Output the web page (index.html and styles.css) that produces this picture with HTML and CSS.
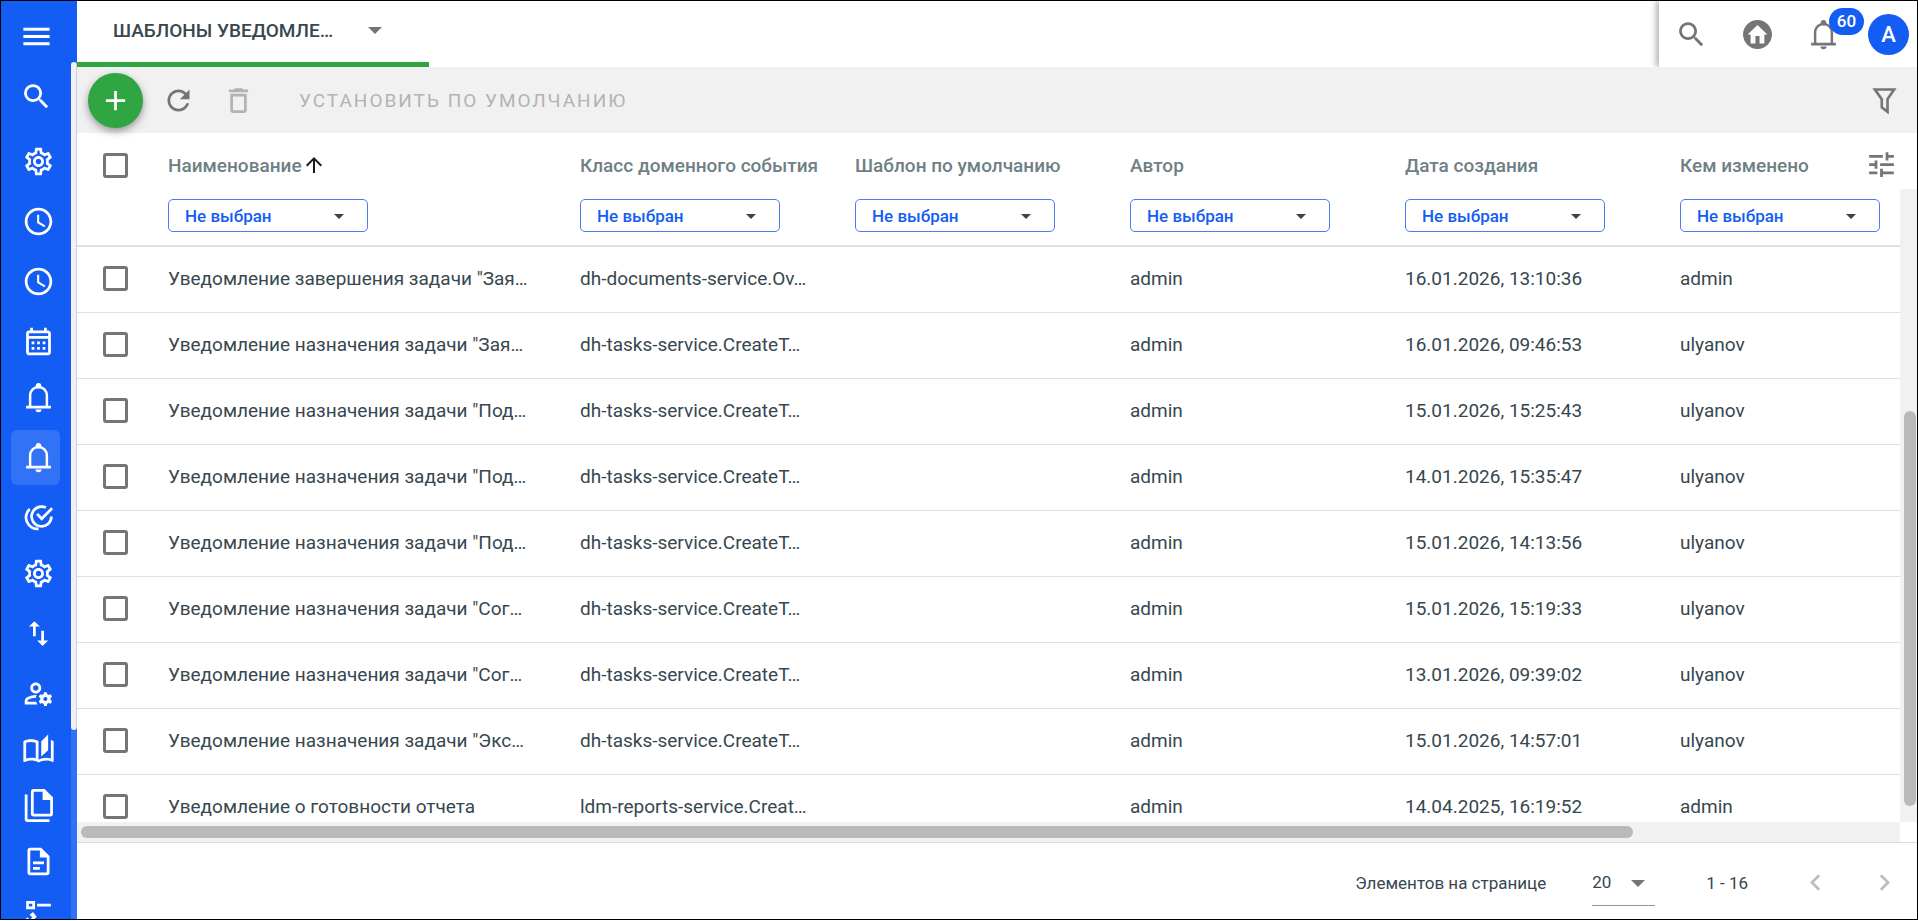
FILE: index.html
```html
<!DOCTYPE html>
<html lang="ru">
<head>
    <meta charset="UTF-8">
    <meta name="viewport" content="width=device-width, initial-scale=1.0">
    <title>Шаблоны уведомлений</title>
    <link rel="stylesheet" href="styles.css">
</head>
<body>
    <!-- icon set -->
    <svg class="sprite" aria-hidden="true">
        <symbol id="i-menu" viewBox="0 0 24 24"><path d="M3 18h18v-2H3v2zm0-5h18v-2H3v2zm0-7v2h18V6H3z"/></symbol>
        <symbol id="i-search" viewBox="0 0 24 24"><path d="M15.5 14h-.79l-.28-.27C15.41 12.59 16 11.11 16 9.5 16 5.91 13.09 3 9.5 3S3 5.91 3 9.5 5.91 16 9.5 16c1.61 0 3.09-.59 4.23-1.57l.27.28v.79l5 4.99L20.49 19l-4.99-5zm-6 0C7.01 14 5 11.99 5 9.5S7.01 5 9.5 5 14 7.01 14 9.5 11.99 14 9.5 14z"/></symbol>
        <symbol id="i-gear" viewBox="0 0 24 24"><path d="M19.43 12.98c.04-.32.07-.64.07-.98 0-.34-.03-.66-.07-.98l2.11-1.65c.19-.15.24-.42.12-.64l-2-3.46c-.09-.16-.26-.25-.44-.25-.06 0-.12.01-.17.03l-2.49 1c-.52-.4-1.08-.73-1.69-.98l-.38-2.65C14.46 2.18 14.25 2 14 2h-4c-.25 0-.46.18-.49.42l-.38 2.65c-.61.25-1.17.59-1.69.98l-2.49-1c-.06-.02-.12-.03-.18-.03-.17 0-.34.09-.43.25l-2 3.46c-.13.22-.07.49.12.64l2.11 1.65c-.04.32-.07.65-.07.98 0 .33.03.66.07.98l-2.11 1.65c-.19.15-.24.42-.12.64l2 3.46c.09.16.26.25.44.25.06 0 .12-.01.17-.03l2.49-1c.52.4 1.08.73 1.69.98l.38 2.65c.03.24.24.42.49.42h4c.25 0 .46-.18.49-.42l.38-2.65c.61-.25 1.17-.59 1.69-.98l2.49 1c.06.02.12.03.18.03.17 0 .34-.09.43-.25l2-3.46c.12-.22.07-.49-.12-.64l-2.11-1.65zm-1.98-1.71c.04.31.05.52.05.73 0 .21-.02.43-.05.73l-.14 1.13.89.7 1.08.84-.7 1.21-1.27-.51-1.04-.42-.9.68c-.43.32-.84.56-1.25.73l-1.06.43-.16 1.13-.2 1.35h-1.4l-.19-1.35-.16-1.13-1.06-.43c-.43-.18-.83-.41-1.23-.71l-.91-.7-1.06.43-1.27.51-.7-1.21 1.08-.84.89-.7-.14-1.13c-.03-.31-.05-.54-.05-.74s.02-.43.05-.73l.14-1.13-.89-.7-1.08-.84.7-1.21 1.27.51 1.04.42.9-.68c.43-.32.84-.56 1.25-.73l1.06-.43.16-1.13.2-1.35h1.39l.19 1.35.16 1.13 1.06.43c.43.18.83.41 1.23.71l.91.7 1.06-.43 1.27-.51.7 1.21-1.07.85-.89.7.14 1.13zM12 8c-2.21 0-4 1.79-4 4s1.79 4 4 4 4-1.79 4-4-1.79-4-4-4zm0 6c-1.1 0-2-.9-2-2s.9-2 2-2 2 .9 2 2-.9 2-2 2z"/></symbol>
        <symbol id="i-clock" viewBox="0 0 24 24"><path d="M11.99 2C6.47 2 2 6.48 2 12s4.47 10 9.99 10C17.52 22 22 17.52 22 12S17.52 2 11.99 2zM12 20c-4.42 0-8-3.58-8-8s3.58-8 8-8 8 3.58 8 8-3.58 8-8 8zm.5-13H11v6l5.25 3.15.75-1.23-4.5-2.67z"/></symbol>
        <symbol id="i-calendar" viewBox="0 0 24 24"><path d="M19 4h-1V2h-2v2H8V2H6v2H5c-1.11 0-1.99.9-1.99 2L3 20c0 1.1.89 2 2 2h14c1.1 0 2-.9 2-2V6c0-1.1-.9-2-2-2zm0 16H5V10h14v10zm0-12H5V6h14v2zM9 14H7v-2h2v2zm4 0h-2v-2h2v2zm4 0h-2v-2h2v2zm-8 4H7v-2h2v2zm4 0h-2v-2h2v2zm4 0h-2v-2h2v2z"/></symbol>
        <symbol id="i-bell" viewBox="0 0 24 24"><circle cx="12" cy="3.4" r="2"/><path d="M3 18h18v2H3zM9.8 20.7h4.4a2.2 2 0 0 1-4.4 0z"/><path d="M5.9 19v-8.4a6.1 6.3 0 0 1 12.2 0V19" fill="none" stroke="currentColor" stroke-width="1.8"/></symbol>
        <symbol id="i-tasks" viewBox="0 0 24 24"><path d="M17.4 4.8A7.2 7.2 0 1 0 21.4 11.2M11 9.4l3.3 3.5 7.6-7.6M5.6 5.8A8.4 8.4 0 0 0 12 20.3" fill="none" stroke="currentColor" stroke-width="2"/></symbol>
        <symbol id="i-swap" viewBox="0 0 24 24"><path d="M16 17.01V10h-2v7.01h-3L15 21l4-3.99h-3zM9 3L5 6.99h3V14h2V6.99h3L9 3z"/></symbol>
        <symbol id="i-accounts" viewBox="0 0 24 24"><path d="M4 18v-.65c0-.34.16-.66.41-.81C6.1 15.53 8.03 15 10 15c.03 0 .05 0 .08.01.1-.7.3-1.37.59-1.98-.22-.02-.44-.03-.67-.03-2.42 0-4.68.67-6.61 1.82C2.51 15.34 2 16.32 2 17.35V20h9.26c-.42-.6-.75-1.28-.97-2H4zM10 12c2.21 0 4-1.79 4-4s-1.79-4-4-4-4 1.79-4 4 1.79 4 4 4zm0-6c1.1 0 2 .9 2 2s-.9 2-2 2-2-.9-2-2 .9-2 2-2zM20.75 16c0-.22-.03-.42-.06-.63l1.14-1.01-1-1.73-1.45.49c-.32-.27-.68-.48-1.08-.63L18 11h-2l-.3 1.49c-.4.15-.76.36-1.08.63l-1.45-.49-1 1.73 1.14 1.01c-.03.21-.06.41-.06.63s.03.42.06.63l-1.14 1.01 1 1.73 1.45-.49c.32.27.68.48 1.08.63L16 21h2l.3-1.49c.4-.15.76-.36 1.08-.63l1.45.49 1-1.73-1.14-1.01c.03-.21.06-.41.06-.63zM17 17.5a1.5 1.5 0 1 1 0-3 1.5 1.5 0 0 1 0 3z"/></symbol>
        <symbol id="i-book" viewBox="0 0 24 24"><path fill-rule="evenodd" d="M19 1l-5 5v11l5-4.500V1zM1 6v14.650c0 .25.25.5.5.5.1 0 .15-.05.25-.05C3.100 20.450 5.050 20 6.500 20c1.950 0 4.050.4 5.500 1.500 1.350-.85 3.800-1.500 5.500-1.500 1.650 0 3.350.3 4.750 1.050.1.05.15.05.25.05.25 0 .5-.25.5-.5V6c-.6-.45-1.250-.75-2-1v13.500c-1.100-.35-2.300-.5-3.500-.5-1.700 0-4.150.65-5.500 1.500V6c-1.450-1.100-3.550-1.500-5.500-1.500S2.450 4.900 1 6zm9 12.400V7.100c-1-.4-2.200-.6-3.500-.6S4 6.700 3 7.100v11.500c1.100-.4 2.300-.6 3.500-.6s2.400.1 3.500.4z"/></symbol>
        <symbol id="i-copy" viewBox="0 0 24 24"><path d="M8.500 1H16l5.500 5.500V18a1 1 0 0 1-1 1h-12a1 1 0 0 1-1-1V2a1 1 0 0 1 1-1zM3 4v18a1 1 0 0 0 1 1h16" fill="none" stroke="currentColor" stroke-width="2"/><path d="M15 1v7h7z"/></symbol>
        <symbol id="i-doc" viewBox="0 0 24 24"><path d="M6 3h7.500L19 8.500V20a1 1 0 0 1-1 1H6a1 1 0 0 1-1-1V4a1 1 0 0 1 1-1z" fill="none" stroke="currentColor" stroke-width="2"/><path d="M13 2v7h7zM8 12h8v2H8zM8 16h5v2H8z"/></symbol>
        <symbol id="i-list" viewBox="0 0 24 24"><path fill-rule="evenodd" d="M3 0h6.500v6H3zm2 2v2h2.500V2zM11 2h10v2H11zM11 13h10v2H11zM5.700 16.500L2.500 13.300l1.400-1.400 1.800 1.800 1.800-1.800L5.500 10 8 8l2.700 3.500z"/></symbol>
        <symbol id="i-home" viewBox="0 0 24 24"><path fill-rule="evenodd" d="M12 1.500a10.500 10.500 0 1 0 0 21 10.500 10.500 0 0 0 0-21zM12 5l7.200 7H17v6.500h-3.500V13h-3v5.500H7V12H4.800z"/></symbol>
        <symbol id="i-refresh" viewBox="0 0 24 24"><path d="M17.650 6.350C16.200 4.900 14.210 4 12 4c-4.420 0-7.990 3.580-7.990 8s3.570 8 7.990 8c3.730 0 6.840-2.550 7.730-6h-2.080c-.82 2.330-3.040 4-5.650 4-3.310 0-6-2.690-6-6s2.690-6 6-6c1.660 0 3.140.69 4.220 1.780L13 11h7V4l-2.350 2.350z"/></symbol>
        <symbol id="i-trash" viewBox="0 0 24 24"><path fill-rule="evenodd" d="M6 19c0 1.100.9 2 2 2h8c1.100 0 2-.9 2-2V7H6v12zM8 9h8v10H8V9zm7.500-5l-1-1h-5l-1 1H5v2h14V4h-3.500z"/></symbol>
        <symbol id="i-plus" viewBox="0 0 24 24"><path d="M19 13h-6v6h-2v-6H5v-2h6V5h2v6h6v2z"/></symbol>
        <symbol id="i-filter" viewBox="0 0 24 24"><path d="M5 4h14l-4.800 7v9.200L10 17v-6z" fill="none" stroke="currentColor" stroke-width="1.900"/></symbol>
        <symbol id="i-tune" viewBox="0 0 24 24"><path d="M3 17v2h6v-2H3zM3 5v2h10V5H3zm10 16v-2h8v-2h-8v-2h-2v6h2zM7 9v2H3v2h4v2h2V9H7zm14 4v-2H11v2h10zm-6-4h2V7h4V5h-4V3h-2v6z"/></symbol>
        <symbol id="i-up" viewBox="0 0 24 24"><path d="M4 12l1.410 1.410L11 7.830V20h2V7.830l5.580 5.590L20 12l-8-8-8 8z"/></symbol>
        <symbol id="i-prev" viewBox="0 0 24 24"><path d="M15.410 7.410L14 6l-6 6 6 6 1.410-1.410L10.830 12z"/></symbol>
        <symbol id="i-next" viewBox="0 0 24 24"><path d="M10 6L8.590 7.410 13.170 12l-4.580 4.590L10 18l6-6z"/></symbol>
    </svg>

    <div class="app">
        <nav class="sidebar">
            <button class="menu-button" aria-label="Меню"><svg class="icon"><use href="#i-menu"/></svg></button>
            <div class="sidebar-scroll">
                <div class="sidebar-items">
                    <button class="nav-search" aria-label="Поиск"><svg class="icon"><use href="#i-search"/></svg></button>
                    <a class="nav-item" href="#" aria-label="Настройки"><svg class="icon"><use href="#i-gear"/></svg></a>
                    <a class="nav-item" href="#" aria-label="История"><svg class="icon"><use href="#i-clock"/></svg></a>
                    <a class="nav-item" href="#" aria-label="Расписание"><svg class="icon"><use href="#i-clock"/></svg></a>
                    <a class="nav-item tight" href="#" aria-label="Календарь"><svg class="icon"><use href="#i-calendar"/></svg></a>
                    <a class="nav-item" href="#" aria-label="Уведомления"><svg class="icon"><use href="#i-bell"/></svg></a>
                    <a class="nav-item active" href="#" aria-label="Шаблоны уведомлений"><svg class="icon"><use href="#i-bell"/></svg></a>
                    <a class="nav-item tight" href="#" aria-label="Задачи"><svg class="icon"><use href="#i-tasks"/></svg></a>
                    <a class="nav-item" href="#" aria-label="Параметры"><svg class="icon"><use href="#i-gear"/></svg></a>
                    <a class="nav-item" href="#" aria-label="Обмен"><svg class="icon"><use href="#i-swap"/></svg></a>
                    <a class="nav-item tight" href="#" aria-label="Пользователи"><svg class="icon"><use href="#i-accounts"/></svg></a>
                    <a class="nav-item tight" href="#" aria-label="Справочники"><svg class="icon"><use href="#i-book"/></svg></a>
                    <a class="nav-item tight" href="#" aria-label="Документы"><svg class="icon"><use href="#i-copy"/></svg></a>
                    <a class="nav-item tight" href="#" aria-label="Отчет"><svg class="icon"><use href="#i-doc"/></svg></a>
                    <a class="nav-item" href="#" aria-label="Список"><svg class="icon"><use href="#i-list"/></svg></a>
                </div>
                <div class="sidebar-track"><div class="sidebar-thumb"></div></div>
            </div>
        </nav>

        <main class="content">
            <header class="topbar">
                <button class="tab"><span>ШАБЛОНЫ УВЕДОМЛЕ…</span><i class="arrow"></i></button>
                <div class="user-panel">
                    <button class="icon-button" aria-label="Поиск"><svg class="icon"><use href="#i-search"/></svg></button>
                    <button class="icon-button" aria-label="Домой"><svg class="icon"><use href="#i-home"/></svg></button>
                    <button class="icon-button" aria-label="Уведомления"><svg class="icon"><use href="#i-bell"/></svg><span class="badge">60</span></button>
                    <button class="avatar">A</button>
                </div>
            </header>

            <div class="toolbar">
                <button class="add-button" aria-label="Добавить"><svg class="icon"><use href="#i-plus"/></svg></button>
                <button class="icon-button" aria-label="Обновить"><svg class="icon"><use href="#i-refresh"/></svg></button>
                <button class="icon-button" aria-label="Удалить" disabled><svg class="icon"><use href="#i-trash"/></svg></button>
                <button class="default-button" disabled>УСТАНОВИТЬ ПО УМОЛЧАНИЮ</button>
                <button class="icon-button filter-button" aria-label="Фильтр"><svg class="icon"><use href="#i-filter"/></svg></button>
            </div>

            <div class="grid-area">
                <div class="grid-main">
                    <div class="table-wrap">
                        <table>
                            <colgroup><col class="col-check"><col class="col-name"><col class="col"><col class="col"><col class="col"><col class="col"><col class="col"></colgroup>
                            <thead>
                                <tr>
                                    <th><input type="checkbox" aria-label="Выбрать все"></th>
                                    <th>
                                        <div class="th-label">Наименование<svg class="sort-icon"><use href="#i-up"/></svg></div>
                                        <div class="select"><select aria-label="Наименование"><option>Не выбран</option></select></div>
                                    </th>
                                    <th>
                                        <div class="th-label">Класс доменного события</div>
                                        <div class="select"><select aria-label="Класс доменного события"><option>Не выбран</option></select></div>
                                    </th>
                                    <th>
                                        <div class="th-label">Шаблон по умолчанию</div>
                                        <div class="select"><select aria-label="Шаблон по умолчанию"><option>Не выбран</option></select></div>
                                    </th>
                                    <th>
                                        <div class="th-label">Автор</div>
                                        <div class="select"><select aria-label="Автор"><option>Не выбран</option></select></div>
                                    </th>
                                    <th>
                                        <div class="th-label">Дата создания</div>
                                        <div class="select"><select aria-label="Дата создания"><option>Не выбран</option></select></div>
                                    </th>
                                    <th>
                                        <div class="th-label">Кем изменено</div>
                                        <div class="select"><select aria-label="Кем изменено"><option>Не выбран</option></select></div>
                                    </th>
                                </tr>
                            </thead>
                            <tbody>
                                <tr><td><input type="checkbox" aria-label="Выбрать"></td><td>Уведомление завершения задачи "Зая…</td><td>dh-documents-service.Ov…</td><td></td><td>admin</td><td>16.01.2026, 13:10:36</td><td>admin</td></tr>
                                <tr><td><input type="checkbox" aria-label="Выбрать"></td><td>Уведомление назначения задачи "Зая…</td><td>dh-tasks-service.CreateT…</td><td></td><td>admin</td><td>16.01.2026, 09:46:53</td><td>ulyanov</td></tr>
                                <tr><td><input type="checkbox" aria-label="Выбрать"></td><td>Уведомление назначения задачи "Под…</td><td>dh-tasks-service.CreateT…</td><td></td><td>admin</td><td>15.01.2026, 15:25:43</td><td>ulyanov</td></tr>
                                <tr><td><input type="checkbox" aria-label="Выбрать"></td><td>Уведомление назначения задачи "Под…</td><td>dh-tasks-service.CreateT…</td><td></td><td>admin</td><td>14.01.2026, 15:35:47</td><td>ulyanov</td></tr>
                                <tr><td><input type="checkbox" aria-label="Выбрать"></td><td>Уведомление назначения задачи "Под…</td><td>dh-tasks-service.CreateT…</td><td></td><td>admin</td><td>15.01.2026, 14:13:56</td><td>ulyanov</td></tr>
                                <tr><td><input type="checkbox" aria-label="Выбрать"></td><td>Уведомление назначения задачи "Сог…</td><td>dh-tasks-service.CreateT…</td><td></td><td>admin</td><td>15.01.2026, 15:19:33</td><td>ulyanov</td></tr>
                                <tr><td><input type="checkbox" aria-label="Выбрать"></td><td>Уведомление назначения задачи "Сог…</td><td>dh-tasks-service.CreateT…</td><td></td><td>admin</td><td>13.01.2026, 09:39:02</td><td>ulyanov</td></tr>
                                <tr><td><input type="checkbox" aria-label="Выбрать"></td><td>Уведомление назначения задачи "Экс…</td><td>dh-tasks-service.CreateT…</td><td></td><td>admin</td><td>15.01.2026, 14:57:01</td><td>ulyanov</td></tr>
                                <tr><td><input type="checkbox" aria-label="Выбрать"></td><td>Уведомление о готовности отчета</td><td>ldm-reports-service.Creat…</td><td></td><td>admin</td><td>14.04.2025, 16:19:52</td><td>admin</td></tr>
                            </tbody>
                        </table>
                        <button class="tune-button" aria-label="Настройка колонок"><svg class="icon"><use href="#i-tune"/></svg></button>
                    </div>
                    <div class="h-track"><div class="h-thumb"></div></div>
                </div>
                <div class="v-track"><div class="v-thumb"></div></div>
            </div>

            <footer class="paginator">
                <label for="page-size">Элементов на странице</label>
                <div class="page-size">
                    <select id="page-size"><option>20</option></select>
                </div>
                <span class="range">1 - 16</span>
                <button class="page-button" aria-label="Назад" disabled><svg class="icon"><use href="#i-prev"/></svg></button>
                <button class="page-button" aria-label="Вперед" disabled><svg class="icon"><use href="#i-next"/></svg></button>
            </footer>
        </main>
    </div>
</body>
</html>
```

FILE: styles.css
```css
* {
    box-sizing: border-box;
    margin: 0;
    padding: 0;
}

body {
    font-family: Roboto, "Liberation Sans", sans-serif;
    font-size: 19px;
    color: #37474f;
    background: #fff;
    height: 100vh;
    padding-bottom: 1px;
    overflow: hidden;
}

button {
    border: none;
    background: none;
    font-family: inherit;
    color: inherit;
    cursor: pointer;
}

select {
    appearance: none;
    border: none;
    background: none;
    font-family: inherit;
    color: inherit;
    outline: none;
}

.sprite {
    display: none;
}

.icon {
    display: block;
    width: 33px;
    height: 33px;
    fill: currentColor;
    flex-shrink: 0;
}

.app {
    display: flex;
    height: 100%;
    border: 1px solid #000;
}

/* sidebar */
.sidebar {
    display: flex;
    flex-direction: column;
    width: 76px;
    flex-shrink: 0;
    background: #135df4;
    color: #fff;
}

.menu-button {
    height: 61px;
    padding: 10px 0 0 18px;
    flex-shrink: 0;
}

.menu-button .icon {
    width: 35px;
    height: 35px;
}

.sidebar-scroll {
    display: flex;
    flex: 1;
    min-height: 0;
    overflow: hidden;
}

.sidebar-items {
    flex: 1;
    padding: 7px 11px 0 10px;
}

.nav-search,
.nav-item {
    display: flex;
    align-items: center;
    width: 49px;
    height: 55px;
    border-radius: 6px;
    color: #fff;
}

.nav-search {
    padding-left: 9px;
    margin-bottom: 10px;
}

.nav-item {
    padding-left: 11px;
    margin-bottom: 5px;
}

.nav-item.tight {
    margin-bottom: 1px;
}

.nav-item.active {
    background: #3272f6;
}

.sidebar-track {
    width: 6px;
    background: #3470f3;
}

.sidebar-thumb {
    height: 78%;
    background: #f1f1f1;
    border-right: 1px solid #cfcfcf;
    border-radius: 3px;
}

/* top bar */
.content {
    display: flex;
    flex-direction: column;
    flex: 1;
    min-width: 0;
}

.topbar {
    display: flex;
    justify-content: space-between;
    height: 66px;
    flex-shrink: 0;
}

.tab {
    display: flex;
    align-items: center;
    justify-content: space-between;
    width: 352px;
    padding: 0 47px 3px 36px;
    border-bottom: 5px solid #2fa641;
    font-size: 19px;
    font-weight: 500;
}

.arrow {
    border: 7px solid transparent;
    border-top-color: #757575;
    border-bottom: none;
}

.user-panel {
    display: flex;
    align-items: center;
    width: 258px;
    padding-left: 16px;
    box-shadow: -3px 0 6px rgba(0, 0, 0, 0.3);
    clip-path: inset(0 0 0 -10px);
    color: #757575;
}

.icon-button {
    position: relative;
    color: #757575;
}

.user-panel .icon-button {
    margin-right: 33px;
}

.badge {
    position: absolute;
    top: -10px;
    left: 22px;
    min-width: 35px;
    height: 27px;
    border-radius: 14px;
    background: #135df4;
    color: #fff;
    font-size: 17px;
    font-weight: 500;
    line-height: 27px;
    text-align: center;
}

.user-panel .icon-button:nth-child(3) {
    margin-right: 28px;
}

.avatar {
    width: 41px;
    height: 41px;
    border-radius: 50%;
    background: #135df4;
    color: #fff;
    font-size: 22px;
    font-weight: 500;
}

/* toolbar */
.toolbar {
    display: flex;
    align-items: center;
    height: 66px;
    padding: 0 16px 0 11px;
    background: #f1f1f1;
    flex-shrink: 0;
}

.add-button {
    display: flex;
    align-items: center;
    justify-content: center;
    width: 55px;
    height: 55px;
    margin-right: 19px;
    border-radius: 50%;
    background: #2fa641;
    color: #fff;
    box-shadow: 0 3px 6px rgba(0, 0, 0, 0.25), 0 4px 12px rgba(0, 0, 0, 0.15);
}

.toolbar .icon-button {
    margin-right: 27px;
}

.toolbar button:disabled {
    color: #b3b3b3;
}

.default-button {
    padding-left: 17px;
    font-size: 19px;
    letter-spacing: 2px;
}

.toolbar .filter-button {
    margin-left: auto;
    margin-right: 0;
}

/* table */
.grid-area {
    display: flex;
    flex: 1;
    min-height: 0;
}

.grid-main {
    display: flex;
    flex-direction: column;
    flex: 1;
    min-width: 0;
}

.table-wrap {
    position: relative;
    flex: 1;
    min-height: 0;
    overflow: hidden;
}

table {
    table-layout: fixed;
    width: 1878px;
    border-collapse: separate;
    border-spacing: 0;
}

.col-check {
    width: 91px;
}

.col-name {
    width: 412px;
}

.col {
    width: 275px;
}

th {
    padding: 20px 0 13px;
    border-bottom: 2px solid #e0e0e0;
    font-weight: 500;
    text-align: left;
    vertical-align: top;
    color: #6f7f86;
    white-space: nowrap;
}

td {
    height: 66px;
    padding-bottom: 2px;
    border-bottom: 1px solid #e0e0e0;
    white-space: nowrap;
}

th:first-child,
td:first-child {
    padding-left: 26px;
}

.th-label {
    display: flex;
    align-items: center;
    height: 24px;
    margin-bottom: 22px;
}

.sort-icon {
    width: 24px;
    height: 24px;
    fill: #1b1b1b;
}

input[type="checkbox"] {
    display: block;
    appearance: none;
    width: 25px;
    height: 25px;
    border: 3px solid #757575;
    border-radius: 3px;
}

.select {
    position: relative;
    width: 200px;
    height: 33px;
    border: 1px solid #4a7bf5;
    border-radius: 5px;
}

.select select {
    width: 100%;
    height: 100%;
    padding-left: 16px;
    font-size: 17px;
    font-weight: 500;
    color: #135df4;
}

.select::after {
    content: "";
    position: absolute;
    top: 14px;
    right: 23px;
    border: 5px solid transparent;
    border-top-color: #37474f;
    border-bottom: none;
    pointer-events: none;
}

.tune-button {
    position: absolute;
    top: 15px;
    right: 2px;
    background: #fff;
    color: #757575;
}

.h-track {
    height: 20px;
    padding: 4px;
    background: #f1f1f1;
    flex-shrink: 0;
}

.h-thumb {
    width: 85.5%;
    height: 12px;
    border-radius: 6px;
    background: #b9b9b9;
}

.v-track {
    display: flex;
    flex-direction: column;
    width: 17px;
    margin: 56px 0 20px;
    padding: 0 1px 16px 4px;
    background: #f1f1f1;
    justify-content: flex-end;
}

.v-thumb {
    height: 64%;
    border-radius: 6px;
    background: #b9b9b9;
}

/* paginator */
.paginator {
    display: flex;
    align-items: center;
    justify-content: flex-end;
    height: 77px;
    padding: 3px 16px 0 0;
    border-top: 1px solid #dcdcdc;
    font-size: 17px;
    flex-shrink: 0;
}

.page-size {
    position: relative;
    width: 63px;
    height: 46px;
    margin: 0 51px 0 46px;
    border-bottom: 1px solid #949494;
}

.page-size select {
    width: 100%;
    height: 100%;
    font-size: 17px;
}

.page-size::after {
    content: "";
    position: absolute;
    top: 20px;
    right: 10px;
    border: 7px solid transparent;
    border-top-color: #757575;
    border-bottom: none;
    pointer-events: none;
}

.range {
    margin-right: 51px;
}

.page-button {
    color: #bdbdbd;
}

.page-button + .page-button {
    margin-left: 36px;
}
```
